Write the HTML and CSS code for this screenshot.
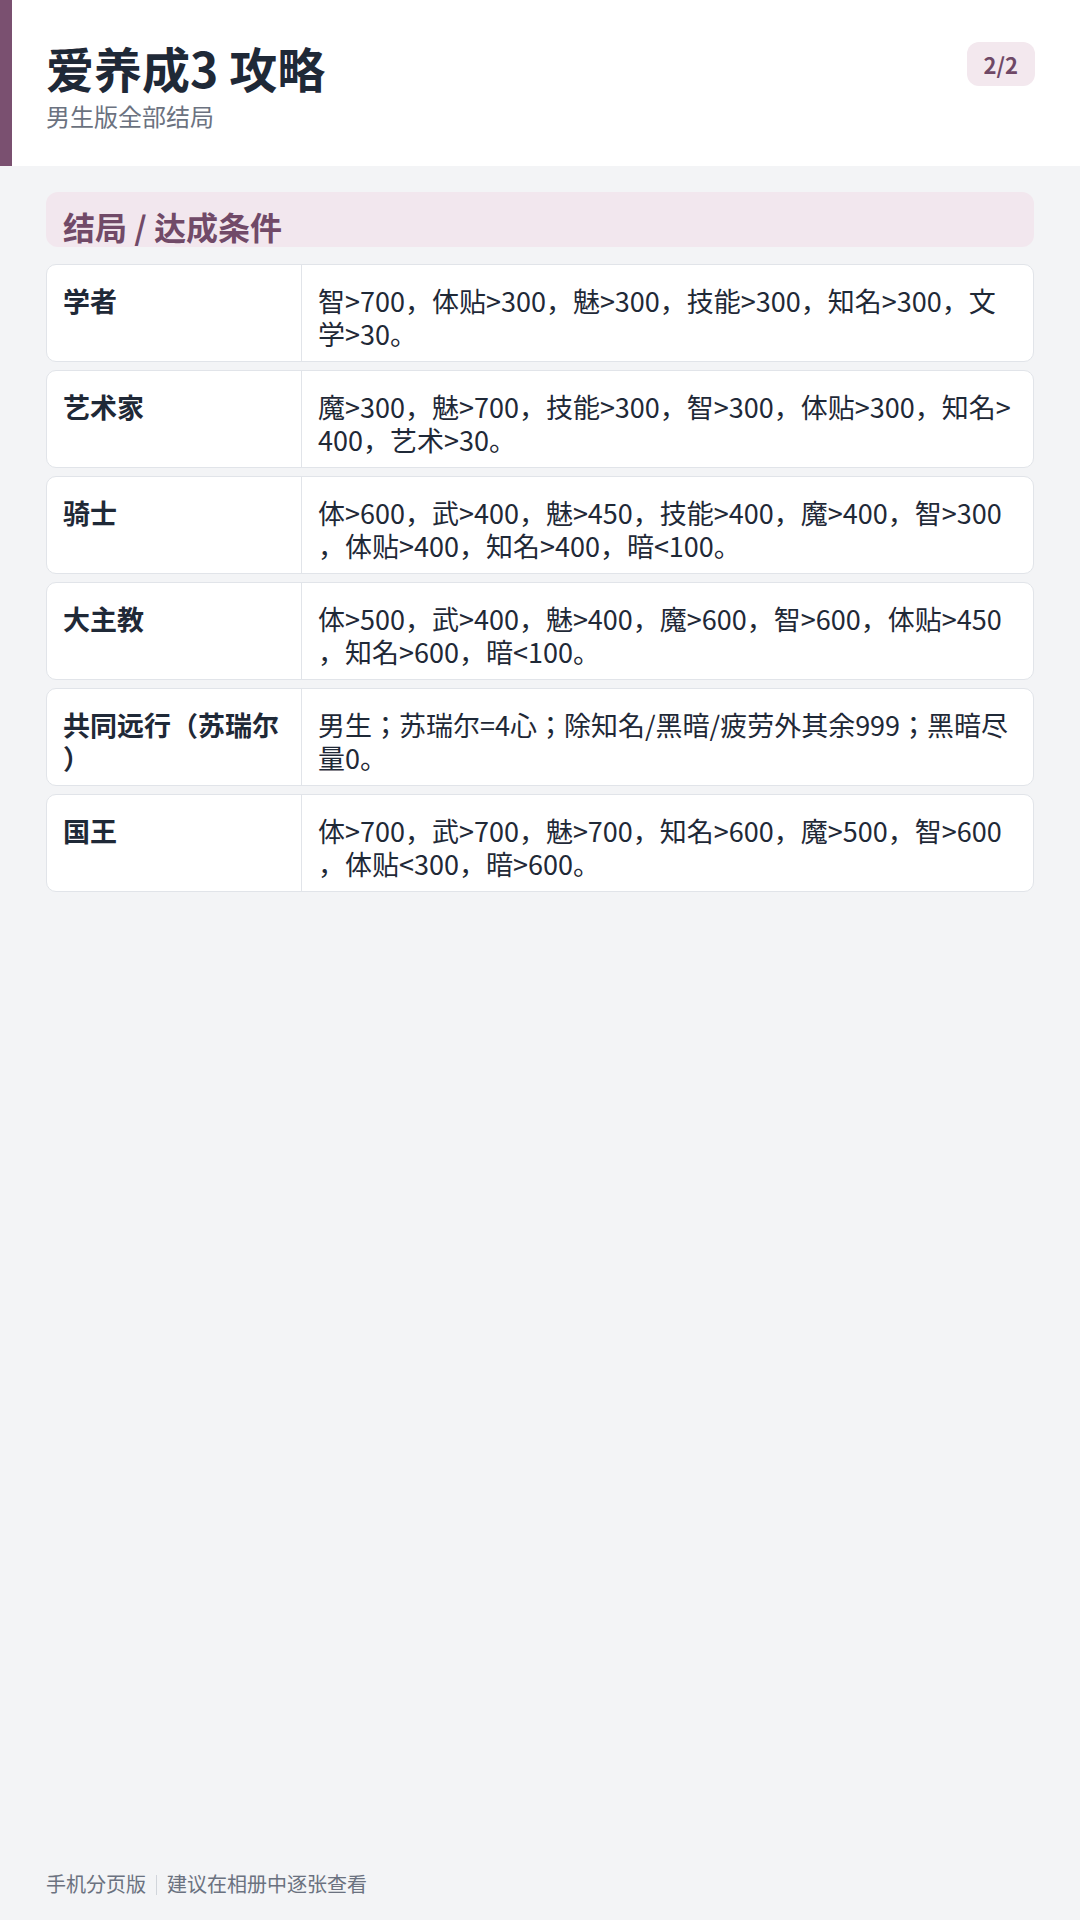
FILE: index.html
```html
<!DOCTYPE html>
<html lang="zh-CN">
<head>
<meta charset="utf-8">
<title>爱养成3 攻略</title>
<link rel="stylesheet" href="styles.css">
</head>
<body>
  <header class="header">
    <div class="heading">
      <h1 class="title">爱养成3 攻略</h1>
      <p class="subtitle">男生版全部结局</p>
    </div>
    <div class="badge">2/2</div>
  </header>

  <main class="main">
    <h2 class="section-title">结局 / 达成条件</h2>
    <div class="rows">
      <div class="row">
        <div class="label">学者</div>
        <div class="value">智&gt;700，体贴&gt;300，魅&gt;300，技能&gt;300，知名&gt;300，文学&gt;30。</div>
      </div>
      <div class="row">
        <div class="label">艺术家</div>
        <div class="value">魔&gt;300，魅&gt;700，技能&gt;300，智&gt;300，体贴&gt;300，知名&gt;400，艺术&gt;30。</div>
      </div>
      <div class="row">
        <div class="label">骑士</div>
        <div class="value">体&gt;600，武&gt;400，魅&gt;450，技能&gt;400，魔&gt;400，智&gt;300，体贴&gt;400，知名&gt;400，暗&lt;100。</div>
      </div>
      <div class="row">
        <div class="label">大主教</div>
        <div class="value">体&gt;500，武&gt;400，魅&gt;400，魔&gt;600，智&gt;600，体贴&gt;450，知名&gt;600，暗&lt;100。</div>
      </div>
      <div class="row">
        <div class="label">共同远行（苏瑞尔）</div>
        <div class="value">男生；苏瑞尔=4心；除知名/黑暗/疲劳外其余999；黑暗尽量0。</div>
      </div>
      <div class="row">
        <div class="label">国王</div>
        <div class="value">体&gt;700，武&gt;700，魅&gt;700，知名&gt;600，魔&gt;500，智&gt;600，体贴&lt;300，暗&gt;600。</div>
      </div>
    </div>
  </main>

  <footer class="footer">手机分页版<span class="sep"></span>建议在相册中逐张查看</footer>
</body>
</html>
```
FILE: styles.css
```css
* {
  box-sizing: border-box;
  margin: 0;
  padding: 0;
}

body {
  width: 1080px;
  min-height: 1920px;
  background: #f3f4f6;
  font-family: "Noto Sans CJK JP", "Noto Sans CJK SC", "Noto Sans", sans-serif;
  font-feature-settings: "locl" 0;
  color: #1f2937;
  display: flex;
  flex-direction: column;
}

.header {
  height: 166px;
  background: #ffffff;
  border-left: 12px solid #7a5070;
  padding: 42px 45px 0 34px;
  display: flex;
  justify-content: space-between;
  align-items: flex-start;
}

.title {
  font-size: 48px;
  font-weight: 700;
  line-height: 50px;
  color: #1f2937;
}

.subtitle {
  margin-top: 9px;
  font-size: 24px;
  line-height: 30px;
  color: #6b7280;
}

.badge {
  height: 44px;
  padding: 0 17px;
  border-radius: 12px;
  background: #f3e8ee;
  color: #6f4866;
  font-size: 22px;
  font-weight: 700;
  line-height: 44px;
}

.main {
  padding: 26px 46px 0;
  display: flex;
  flex-direction: column;
}

.section-title {
  height: 55px;
  padding: 18px 17px 0;
  background: #f2e7ee;
  border-radius: 12px;
  font-size: 32px;
  font-weight: 700;
  line-height: 32px;
  color: #714a68;
}

.rows {
  margin-top: 17px;
  display: flex;
  flex-direction: column;
  gap: 8px;
}

.row {
  display: grid;
  grid-template-columns: 255px 1fr;
  background: #ffffff;
  border: 1px solid #e1e4e9;
  border-radius: 10px;
}

.label {
  padding: 19px 16px 11px;
  border-right: 1px solid #e1e4e9;
  font-size: 27px;
  font-weight: 700;
  line-height: 33px;
  line-break: anywhere;
  color: #1f2937;
}

.value {
  padding: 19px 16px 11px;
  font-size: 27px;
  line-height: 33px;
  line-break: anywhere;
  color: #1f2937;
}

.footer {
  margin-top: auto;
  padding: 0 46px 22px;
  font-size: 20px;
  line-height: 28px;
  color: #6b7280;
}

.sep {
  display: inline-block;
  width: 1px;
  height: 20px;
  margin: 0 10px;
  background: #d1d5db;
  vertical-align: -3px;
}
```
